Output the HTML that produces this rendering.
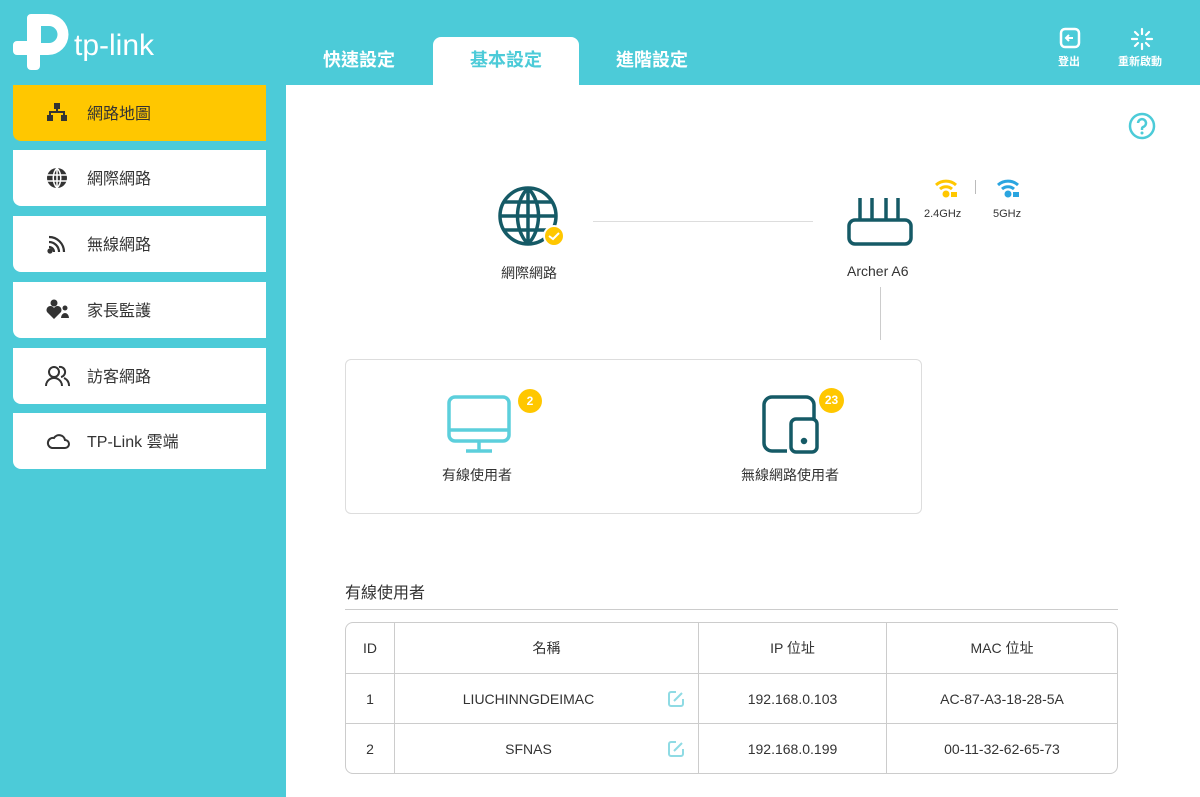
<!DOCTYPE html>
<html><head><meta charset="utf-8"><style>
*{margin:0;padding:0;box-sizing:border-box}
body{width:1200px;height:797px;background:#4ccbd8;font-family:"Liberation Sans","Noto Sans CJK TC",sans-serif;position:relative;overflow:hidden;color:#333}
.abs{position:absolute}
.tab{position:absolute;top:37px;height:48px;width:146px;text-align:center;line-height:46px;font-size:18px;color:#fff;font-weight:bold}
.tab.on{background:#fff;color:#4ccbd8;border-radius:8px 8px 0 0}
.side{position:absolute;left:13px;width:253px;height:56px;background:#fff;border-radius:0 0 0 8px;font-size:16px;color:#333}
.side span{position:absolute;left:74px;top:15px}
.side svg{position:absolute;left:32px;top:16px}
.panel{position:absolute;left:286px;top:85px;width:914px;height:712px;background:#fff}
table{border-collapse:separate;border-spacing:0;position:absolute;left:345px;top:622px;width:773px;border:1px solid #ccc;border-radius:8px;font-size:14px;color:#333}
td{height:50px;text-align:center;border-left:1px solid #ccc;border-top:1px solid #ccc}
tr:first-child td{border-top:none}
td:first-child{border-left:none}
</style></head><body>
<svg class="abs" style="left:12px;top:14px" width="60" height="58" viewBox="0 0 60 58"><path fill="#fff" d="M19 0H36a20.5 20.5 0 0 1 0 41H28V52a4 4 0 0 1-4 4H19a4 4 0 0 1-4-4V41H5a4 4 0 0 1-4-4V31a4 4 0 0 1 4-4H15V4a4 4 0 0 1 4-4Z"/><path fill="#4ccbd8" d="M29 12H37a8.5 8.5 0 0 1 0 17H29Z"/></svg>
<div class="abs" style="left:74px;top:29px;font-size:30px;color:#fff">tp-link</div>
<div class="tab" style="left:286px">快速設定</div>
<div class="tab on" style="left:433px">基本設定</div>
<div class="tab" style="left:579px">進階設定</div>
<svg class="abs" style="left:1059px;top:27px" width="22" height="22" viewBox="0 0 22 22"><rect x="2" y="2" width="18" height="18" rx="4" fill="none" stroke="#fff" stroke-width="2.5"/><path d="M14 11H7M10 8l-3 3 3 3" stroke="#fff" stroke-width="2" fill="none"/></svg>
<div class="abs" style="left:1058px;top:53px;font-size:11px;color:#fff;font-weight:bold">登出</div>
<svg class="abs" style="left:1130px;top:27px" width="24" height="24" viewBox="0 0 24 24" stroke="#fff" stroke-width="2.2" stroke-linecap="round"><path d="M12 2v5M12 17v5M2 12h5M17 12h5M5 5l3 3M16 16l3 3M5 19l3-3M16 8l3-3"/></svg>
<div class="abs" style="left:1118px;top:53px;font-size:11px;color:#fff;font-weight:bold">重新啟動</div>

<div class="side" style="top:85px;background:#ffc700"><svg width="24" height="22" viewBox="0 0 24 22" fill="#333"><rect x="9" y="2" width="6" height="6"/><rect x="2" y="14" width="6" height="6"/><rect x="16" y="14" width="6" height="6"/><path d="M12 8v3M5 14v-3h14v3" stroke="#333" stroke-width="2" fill="none"/></svg><span>網路地圖</span></div>
<div class="side" style="top:150px"><svg width="24" height="24" viewBox="0 0 24 24"><circle cx="12" cy="12" r="10" fill="#333"/><path d="M2 9h20M2 15h20M12 2v20M12 2c-5 5-5 15 0 20M12 2c5 5 5 15 0 20" stroke="#fff" stroke-width="1.5" fill="none"/></svg><span>網際網路</span></div>
<div class="side" style="top:216px"><svg width="24" height="24" viewBox="0 0 24 24" stroke="#333" stroke-width="2.2" fill="none"><path d="M4 5a15 15 0 0 1 15 15M4 10a10 10 0 0 1 10 10M4 15a5 5 0 0 1 5 5"/><circle cx="5" cy="19" r="1.5" fill="#333"/></svg><span>無線網路</span></div>
<div class="side" style="top:282px"><svg width="26" height="24" viewBox="0 0 26 24" fill="#333"><circle cx="9" cy="5" r="3.5"/><path d="M9 21l-7-7a4 4 0 0 1 7-4 4 4 0 0 1 7 4z"/><circle cx="20" cy="10" r="2.5"/><path d="M16 20a4 5 0 0 1 8 0z"/></svg><span>家長監護</span></div>
<div class="side" style="top:348px"><svg width="26" height="24" viewBox="0 0 26 24" stroke="#333" stroke-width="2" fill="none"><circle cx="9" cy="8" r="5"/><path d="M1 22a8 8 0 0 1 16 0"/><path d="M14 3a5 5 0 0 1 2 10M19 14a8 8 0 0 1 5 8"/></svg><span>訪客網路</span></div>
<div class="side" style="top:413px"><svg width="26" height="24" viewBox="0 0 26 24" stroke="#333" stroke-width="2" fill="none"><path d="M7 19h13a4 4 0 0 0 0-8 6 6 0 0 0-11-2 5 5 0 0 0-2 10z"/></svg><span>TP-Link 雲端</span></div>

<div class="panel"></div>
<svg class="abs" style="left:1128px;top:112px" width="28" height="28" viewBox="0 0 28 28"><circle cx="14" cy="14" r="12" fill="none" stroke="#4ccbd8" stroke-width="2.5"/><path d="M10 11a4 4 0 1 1 5 4c-1 .5-1 1-1 3" stroke="#4ccbd8" stroke-width="2.5" fill="none"/><circle cx="14" cy="21" r="1.5" fill="#4ccbd8"/></svg>

<svg class="abs" style="left:496px;top:185px" width="70" height="66" viewBox="0 0 70 66"><g stroke="#155a66" stroke-width="3.5" fill="none"><circle cx="32" cy="31" r="28"/><path d="M4 31h56M8 17h48M8 45h48M32 3v56M32 3c-14 14-14 42 0 56M32 3c14 14 14 42 0 56"/></g><circle cx="58" cy="51" r="10" fill="#ffc700" stroke="#fff" stroke-width="2"/><path d="M53 51l4 3 6-6" stroke="#fff" stroke-width="2" fill="none"/></svg>
<div class="abs" style="left:501px;top:263px;font-size:14px">網際網路</div>
<div class="abs" style="left:593px;top:221px;width:220px;height:1px;background:#ddd"></div>
<svg class="abs" style="left:846px;top:195px" width="68" height="52" viewBox="0 0 68 52" stroke="#155a66" stroke-width="3.5" fill="none"><rect x="3" y="25" width="62" height="24" rx="6"/><path d="M14 25V3M26 25V3M40 25V3M52 25V3"/></svg>
<div class="abs" style="left:847px;top:263px;font-size:14px">Archer A6</div>
<div class="abs" style="left:880px;top:287px;width:1px;height:53px;background:#ccc"></div>
<svg class="abs" style="left:934px;top:177px" width="26" height="22" viewBox="0 0 26 22" stroke="#ffc700" stroke-width="3" fill="none"><path d="M2 8a15 15 0 0 1 20 0M6 12a9 9 0 0 1 12 0"/><circle cx="12" cy="17" r="2" fill="#ffc700"/><rect x="17" y="15" width="6" height="5" fill="#ffc700" stroke="none"/></svg>
<div class="abs" style="left:975px;top:180px;width:1px;height:14px;background:#bbb"></div>
<svg class="abs" style="left:996px;top:177px" width="26" height="22" viewBox="0 0 26 22" stroke="#2aa5e0" stroke-width="3" fill="none"><path d="M2 8a15 15 0 0 1 20 0M6 12a9 9 0 0 1 12 0"/><circle cx="12" cy="17" r="2" fill="#2aa5e0"/><rect x="17" y="15" width="6" height="5" fill="#2aa5e0" stroke="none"/></svg>
<div class="abs" style="left:924px;top:208px;font-size:11px">2.4GHz</div>
<div class="abs" style="left:993px;top:208px;font-size:11px">5GHz</div>

<div class="abs" style="left:345px;top:359px;width:577px;height:155px;border:1px solid #ddd;border-radius:6px"></div>
<svg class="abs" style="left:446px;top:394px" width="66" height="62" viewBox="0 0 66 62" stroke="#5ccfdc" stroke-width="3.5" fill="none"><rect x="3" y="3" width="60" height="44" rx="6"/><path d="M3 36h60M33 47v10M20 57h26"/></svg>
<div class="abs" style="left:518px;top:389px;width:24px;height:24px;border-radius:50%;background:#ffc700;color:#fff;font-size:12px;font-weight:bold;text-align:center;line-height:24px">2</div>
<div class="abs" style="left:442px;top:465px;font-size:14px">有線使用者</div>
<svg class="abs" style="left:761px;top:395px" width="60" height="60" viewBox="0 0 60 60" stroke="#155a66" stroke-width="3.5" fill="none"><path d="M26 56H11a8 8 0 0 1-8-8V10a8 8 0 0 1 8-8h34a8 8 0 0 1 8 8v14"/><rect x="30" y="24" width="26" height="33" rx="5"/><circle cx="43" cy="46" r="1.5" fill="#155a66"/></svg>
<div class="abs" style="left:819px;top:388px;width:25px;height:25px;border-radius:50%;background:#ffc700;color:#fff;font-size:12px;font-weight:bold;text-align:center;line-height:25px">23</div>
<div class="abs" style="left:741px;top:465px;font-size:14px">無線網路使用者</div>

<div class="abs" style="left:345px;top:579px;font-size:16px">有線使用者</div>
<div class="abs" style="left:345px;top:609px;width:773px;height:1px;background:#ccc"></div>
<table>
<tr><td style="width:48px">ID</td><td style="width:304px">名稱</td><td style="width:188px">IP 位址</td><td>MAC 位址</td></tr>
<tr><td>1</td><td style="position:relative;padding-right:36px">LIUCHINNGDEIMAC<svg style="position:absolute;left:272px;top:16px" width="18" height="18" viewBox="0 0 18 18" stroke="#8fdbe4" stroke-width="2" fill="none"><path d="M9 2H4a2 2 0 0 0-2 2v10a2 2 0 0 0 2 2h10a2 2 0 0 0 2-2V9"/><path d="M7 11l8-8"/></svg></td><td>192.168.0.103</td><td>AC-87-A3-18-28-5A</td></tr>
<tr><td>2</td><td style="position:relative;padding-right:36px">SFNAS<svg style="position:absolute;left:272px;top:16px" width="18" height="18" viewBox="0 0 18 18" stroke="#8fdbe4" stroke-width="2" fill="none"><path d="M9 2H4a2 2 0 0 0-2 2v10a2 2 0 0 0 2 2h10a2 2 0 0 0 2-2V9"/><path d="M7 11l8-8"/></svg></td><td>192.168.0.199</td><td>00-11-32-62-65-73</td></tr>
</table>
</body></html>
